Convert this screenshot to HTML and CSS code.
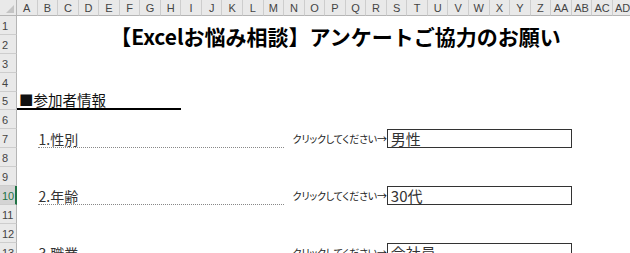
FILE: index.html
```html
<!DOCTYPE html>
<html lang="ja">
<head>
    <meta charset="UTF-8">
    <title>アンケート</title>
    <link rel="stylesheet" href="styles.css">
</head>
<body>
    <div class="sheet">
        <div class="corner"><span class="corner-mark"></span></div>
        <div class="col-head">A</div>
        <div class="col-head">B</div>
        <div class="col-head">C</div>
        <div class="col-head">D</div>
        <div class="col-head">E</div>
        <div class="col-head">F</div>
        <div class="col-head">G</div>
        <div class="col-head">H</div>
        <div class="col-head">I</div>
        <div class="col-head">J</div>
        <div class="col-head">K</div>
        <div class="col-head">L</div>
        <div class="col-head">M</div>
        <div class="col-head">N</div>
        <div class="col-head">O</div>
        <div class="col-head">P</div>
        <div class="col-head">Q</div>
        <div class="col-head">R</div>
        <div class="col-head">S</div>
        <div class="col-head">T</div>
        <div class="col-head">U</div>
        <div class="col-head">V</div>
        <div class="col-head">W</div>
        <div class="col-head">X</div>
        <div class="col-head">Y</div>
        <div class="col-head">Z</div>
        <div class="col-head">AA</div>
        <div class="col-head">AB</div>
        <div class="col-head">AC</div>
        <div class="col-head">AD</div>
        <div class="col-head">AE</div>

        <div class="row-head r1">1</div>
        <div class="row-head r2">2</div>
        <div class="row-head r3">3</div>
        <div class="row-head r4">4</div>
        <div class="row-head r5">5</div>
        <div class="row-head r6">6</div>
        <div class="row-head r7">7</div>
        <div class="row-head r8">8</div>
        <div class="row-head r9">9</div>
        <div class="row-head r10 selected">10</div>
        <div class="row-head r11">11</div>
        <div class="row-head r12">12</div>
        <div class="row-head r13">13</div>

        <!-- タイトル -->
        <div class="title">【Excelお悩み相談】アンケートご協力のお願い</div>

        <div class="section r5">■参加者情報</div>

        <div class="question r7">1.性別</div>
        <div class="hint r7">クリックしてください→</div>
        <div class="answer r7">男性</div>

        <div class="question r10">2.年齢</div>
        <div class="hint r10">クリックしてください→</div>
        <div class="answer r10">30代</div>

        <div class="question r13">3.職業</div>
        <div class="hint r13">クリックしてください→</div>
        <div class="answer r13">会社員</div>
    </div>
</body>
</html>
```

FILE: styles.css
```css
body {
    margin: 0;
    background: #fff;
    overflow: hidden;
    font-family: "Noto Sans CJK JP", sans-serif;
}
.sheet {
    display: grid;
    grid-template-columns: 17px repeat(31, 20.55px);
    grid-template-rows: 16px repeat(13, 18.9px);
    width: 660px;
}
/* 見出し (列・行) */
.corner {
    grid-column: 1;
    grid-row: 1;
    background: #e9e9e9;
    border-right: 1px solid #b5b5b5;
    border-bottom: 1px solid #b5b5b5;
    box-sizing: border-box;
    position: relative;
}
.corner-mark {
    position: absolute;
    right: 2px;
    bottom: 2px;
    width: 0;
    height: 0;
    border-left: 8px solid transparent;
    border-bottom: 8px solid #c4c4c4;
}
.col-head {
    grid-row: 1;
    background: #e9e9e9;
    border-right: 1px solid #cdcdcd;
    border-bottom: 1px solid #b5b5b5;
    box-sizing: border-box;
    font-family: "Liberation Sans", Arial, sans-serif;
    font-size: 11px;
    color: #444;
    display: flex;
    align-items: center;
    justify-content: center;
    padding-top: 1px;
}
.row-head {
    grid-column: 1;
    background: #e9e9e9;
    border-right: 1px solid #b5b5b5;
    border-bottom: 1px solid #cdcdcd;
    box-sizing: border-box;
    font-family: "Liberation Sans", Arial, sans-serif;
    font-size: 11px;
    color: #444;
    display: flex;
    align-items: flex-end;
    padding: 0 0 2px 2px;
}
.row-head.selected {
    background: #d4d4d4;
    color: #217346;
    border-right: 2px solid #217346;
}
.r1 { grid-row: 2; }
.r2 { grid-row: 3; }
.r3 { grid-row: 4; }
.r4 { grid-row: 5; }
.r5 { grid-row: 6; }
.r6 { grid-row: 7; }
.r7 { grid-row: 8; }
.r8 { grid-row: 9; }
.r9 { grid-row: 10; }
.r10 { grid-row: 11; }
.r11 { grid-row: 12; }
.r12 { grid-row: 13; }
.r13 { grid-row: 14; }
/* セル内容 */
.title {
    grid-column: 2 / 33;
    grid-row: 2 / 4;
    display: flex;
    align-items: center;
    justify-content: center;
    font-size: 21px;
    font-weight: bold;
    color: #000;
    padding-top: 3px;
    white-space: nowrap;
}
.section {
    grid-column: 2 / 10;
    border-bottom: 2px solid #000;
    font-size: 14.5px;
    color: #111;
    display: flex;
    align-items: flex-end;
    line-height: 1;
    padding-left: 2px;
    padding-bottom: 1px;
}
.question {
    grid-column: 3 / 15;
    border-bottom: 1px dotted #888;
    font-size: 14px;
    color: #333;
    display: flex;
    align-items: flex-end;
    line-height: 1;
    padding-left: 1px;
    padding-bottom: 1px;
}
.hint {
    grid-column: 15 / 20;
    font-size: 10px;
    font-feature-settings: "palt";
    color: #222;
    display: flex;
    align-items: center;
    justify-content: flex-end;
    white-space: nowrap;
    letter-spacing: -0.2px;
}
.answer {
    grid-column: 20 / 29;
    border: 1px solid #333;
    font-size: 15px;
    color: #333;
    display: flex;
    align-items: center;
    line-height: 1;
    padding-left: 3px;
}
```
